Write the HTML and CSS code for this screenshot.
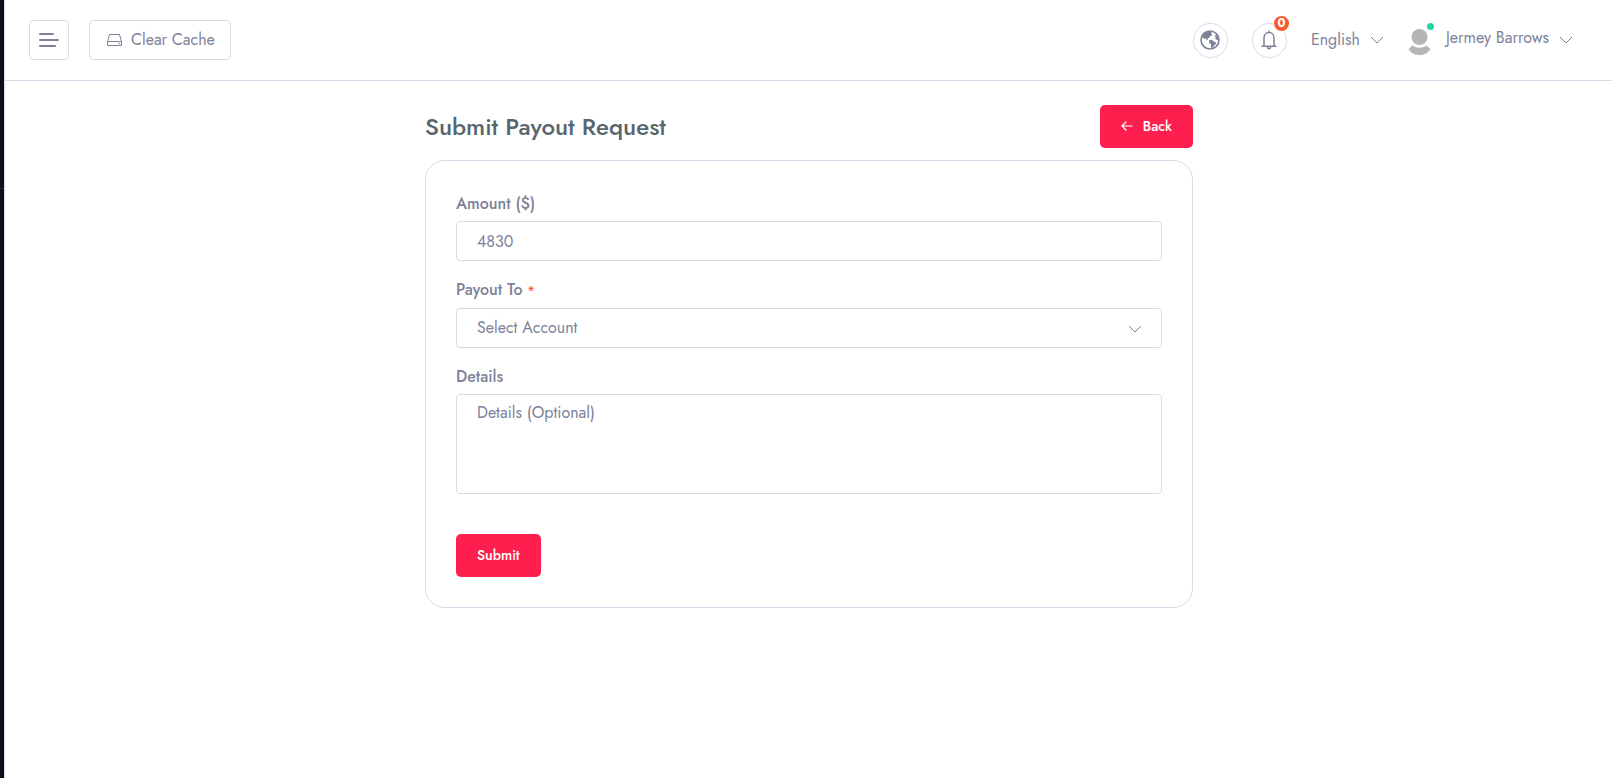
FILE: index.html
```html
<!DOCTYPE html>
<html lang="en">
    <head>
        <meta charset="utf-8">
        <meta name="viewport" content="width=device-width, initial-scale=1">
        <title>Submit Payout Request</title>
        <link rel="stylesheet" href="styles.css">
    </head>
    <body>
        <aside class="sidebar">
            <div class="sidebar-logo"></div>
        </aside>

        <div class="page">
            <header class="header">
                <button class="menu-btn" type="button" aria-label="Toggle menu">
                    <svg width="20" height="14" viewBox="0 0 20 14" fill="none" stroke="currentColor" stroke-width="2" stroke-linecap="round">
                        <path d="M1 1h13M1 7h18M1 13h15"/>
                    </svg>
                </button>
                <button class="cache-btn" type="button">
                    <svg width="15" height="12" viewBox="0 0 15 12" fill="none" stroke="currentColor" stroke-linejoin="round">
                        <path d="M2.500 .5h10l2 7v4H.5v-4zM.5 7.500h14M11.500 9.500h1.500"/>
                    </svg>
                    Clear Cache
                </button>

                <div class="header-right">
                    <a class="round-btn" href="#" aria-label="Visit website">
                        <svg width="20" height="20" viewBox="0 0 20 20">
                            <circle cx="10" cy="10" r="9" fill="none" stroke="currentColor" stroke-width="1.600"/>
                            <path fill="currentColor" d="M2 7C3.500 3.500 6 1.500 9.500 1.200l2.300.8-.8 1.500 1.200.5-.4 1.500-1.800.7-.8 1.500-1.700.8.4 1.500-1.300-.2-1-1.300-1.300.3z"/>
                            <path fill="currentColor" d="M9 10.300l2-.6 1.800.7 1 1.200 2.300.8-.6 2-1.500 1.100-.7 1.600-2 1.300-.4-2.400.3-1.500-1.900-1.600z"/>
                            <path fill="currentColor" d="M14.500 5.500l2-.5 1.700 3 .3 2.500-1.800-.8-1.600-1.500.6-1.200z"/>
                        </svg>
                    </a>
                    <a class="round-btn" href="#" aria-label="Notifications">
                        <svg width="16" height="20" viewBox="0 0 16 20" fill="none" stroke="currentColor" stroke-width="1.500">
                            <path d="M8 .5v1.500M3 16V8.500C3 5 5 2.500 8 2.500s5 2.500 5 6V16M.5 16.200h15"/>
                            <path d="M6.500 16.500c0 3 3 3 3 0"/>
                        </svg>
                        <span class="badge">0</span>
                    </a>
                    <button class="dropdown" type="button">
                        English
                        <svg class="chevron" width="14" height="8" viewBox="0 0 14 8"><path d="M1 1l6 6 6-6"/></svg>
                    </button>
                    <button class="dropdown" type="button">
                        <span class="avatar">
                            <svg width="23" height="28" viewBox="0.5 0 23 28" fill="#b5b5b5">
                                <circle cx="12" cy="9" r="8"/>
                                <path d="M5 17.500c4 3 10 3 14 0l4 3.500c-2.500 4-6 6-11 6s-8.500-2-11-6z"/>
                            </svg>
                            <span class="online"></span>
                        </span>
                        <span class="name">Jermey Barrows</span>
                        <svg class="chevron" width="14" height="8" viewBox="0 0 14 8"><path d="M1 1l6 6 6-6"/></svg>
                    </button>
                </div>
            </header>

            <main class="main">
                <div class="column">
                    <div class="title-row">
                        <h1>Submit Payout Request</h1>
                        <a class="btn" href="#">
                            <svg width="12" height="10" viewBox="0 0 12 10" fill="none" stroke="currentColor" stroke-width="1.200" stroke-linecap="round" stroke-linejoin="round">
                                <path d="M11 5H1M5 1L1 5l4 4"/>
                            </svg>
                            Back
                        </a>
                    </div>

                    <form class="card">
                        <div class="field">
                            <label for="amount">Amount ($)</label>
                            <input id="amount" type="text" value="4830">
                        </div>
                        <div class="field">
                            <label for="account">Payout To <span class="required">*</span></label>
                            <div class="select">
                                <select id="account">
                                    <option>Select Account</option>
                                </select>
                                <svg class="chevron" width="14" height="8" viewBox="0 0 14 8"><path d="M1 1l6 6 6-6"/></svg>
                            </div>
                        </div>
                        <div class="field">
                            <label for="details">Details</label>
                            <textarea id="details" placeholder="Details (Optional)"></textarea>
                        </div>
                        <button class="btn submit" type="submit">Submit</button>
                    </form>
                </div>
            </main>
        </div>
    </body>
</html>
```

FILE: styles.css
```css
* {
    box-sizing: border-box;
}
body {
    display: flex;
    min-height: 100vh;
    margin: 0;
    font-family: Jost, Lato, sans-serif;
    font-size: 16px;
    line-height: 26px;
    color: #7e8299;
    background-color: #fff;
}
button, input, select, textarea {
    font: inherit;
    color: inherit;
}
button {
    cursor: pointer;
}
a {
    color: inherit;
    text-decoration: none;
}
svg {
    flex: none;
}

.sidebar {
    flex: none;
    width: 4px;
    background-color: #0f0d1b;
}
.sidebar-logo {
    height: 189px;
    border-bottom: 1px solid #2a2244;
}
.page {
    flex: 1;
    min-width: 0;
    border-left: 1px solid #d5dbe9;
}

/* top bar */
.header {
    display: flex;
    align-items: center;
    gap: 20px;
    height: 81px;
    padding: 0 39px 0 24px;
    border-bottom: 1px solid #d5dbe9;
}
.menu-btn, .cache-btn {
    display: flex;
    align-items: center;
    justify-content: center;
    height: 40px;
    background-color: #fff;
    border: 1px solid #d5dbe9;
    border-radius: 4px;
}
.menu-btn {
    width: 40px;
    padding: 0;
}
.cache-btn {
    gap: 9px;
    padding: 0 15px 0 17px;
}
.header-right {
    display: flex;
    align-items: center;
    gap: 24px;
    margin-left: auto;
}
.round-btn {
    position: relative;
    display: flex;
    align-items: center;
    justify-content: center;
    width: 35px;
    height: 35px;
    border: 1px solid #d5dbe9;
    border-radius: 50%;
}
.badge {
    position: absolute;
    top: -8px;
    right: -3px;
    width: 15px;
    height: 15px;
    border-radius: 50%;
    background-color: #ff5630;
    color: #fff;
    font-size: 12px;
    font-weight: 700;
    line-height: 14px;
    text-align: center;
}
.dropdown {
    display: flex;
    align-items: center;
    gap: 10px;
    padding: 0;
    background: none;
    border: 0;
}
.avatar {
    position: relative;
    display: flex;
    margin: 4px 5px 0 0;
}
.online {
    position: absolute;
    top: -5px;
    right: -3px;
    width: 7px;
    height: 7px;
    border-radius: 50%;
    background-color: #20d6a4;
}
.name {
    padding-bottom: 4px;
}
.chevron {
    fill: none;
    stroke: currentColor;
}

/* payout form */
.main {
    display: flex;
    justify-content: center;
    padding: 24px 11px 24px 12px;
}
.column {
    width: 50%;
    padding: 0 12px;
}
.title-row {
    display: flex;
    align-items: center;
    justify-content: space-between;
    margin-bottom: 12px;
}
h1 {
    margin: 0;
    font-size: 24px;
    font-weight: 500;
    line-height: 31px;
    color: #58666e;
}
.btn {
    display: inline-flex;
    align-items: center;
    gap: 10px;
    height: 43px;
    padding: 0 21px 1px;
    border: 0;
    border-radius: 5px;
    background-color: #ff1f4f;
    color: #fff;
    font-size: 14px;
    font-weight: 500;
    line-height: 24px;
}
.card {
    padding: 30px;
    border: 1px solid #d5dbe9;
    border-radius: 20px;
}
.field {
    margin-bottom: 16px;
}
label {
    display: block;
    margin-bottom: 4px;
    font-weight: 500;
}
.required {
    color: #ff5630;
    font-size: 13px;
}
input, select, textarea {
    display: block;
    width: 100%;
    height: 40px;
    padding: 0 20px;
    border: 1px solid #d5dbe9;
    border-radius: 4px;
    background-color: #fff;
    outline: 0;
}
select {
    appearance: none;
}
textarea {
    height: 100px;
    padding-top: 5px;
    resize: none;
}
textarea::placeholder {
    color: inherit;
    opacity: 1;
}
.select {
    position: relative;
}
.select .chevron {
    position: absolute;
    top: 17px;
    right: 20px;
    pointer-events: none;
}
.submit {
    margin-top: 24px;
}
```
